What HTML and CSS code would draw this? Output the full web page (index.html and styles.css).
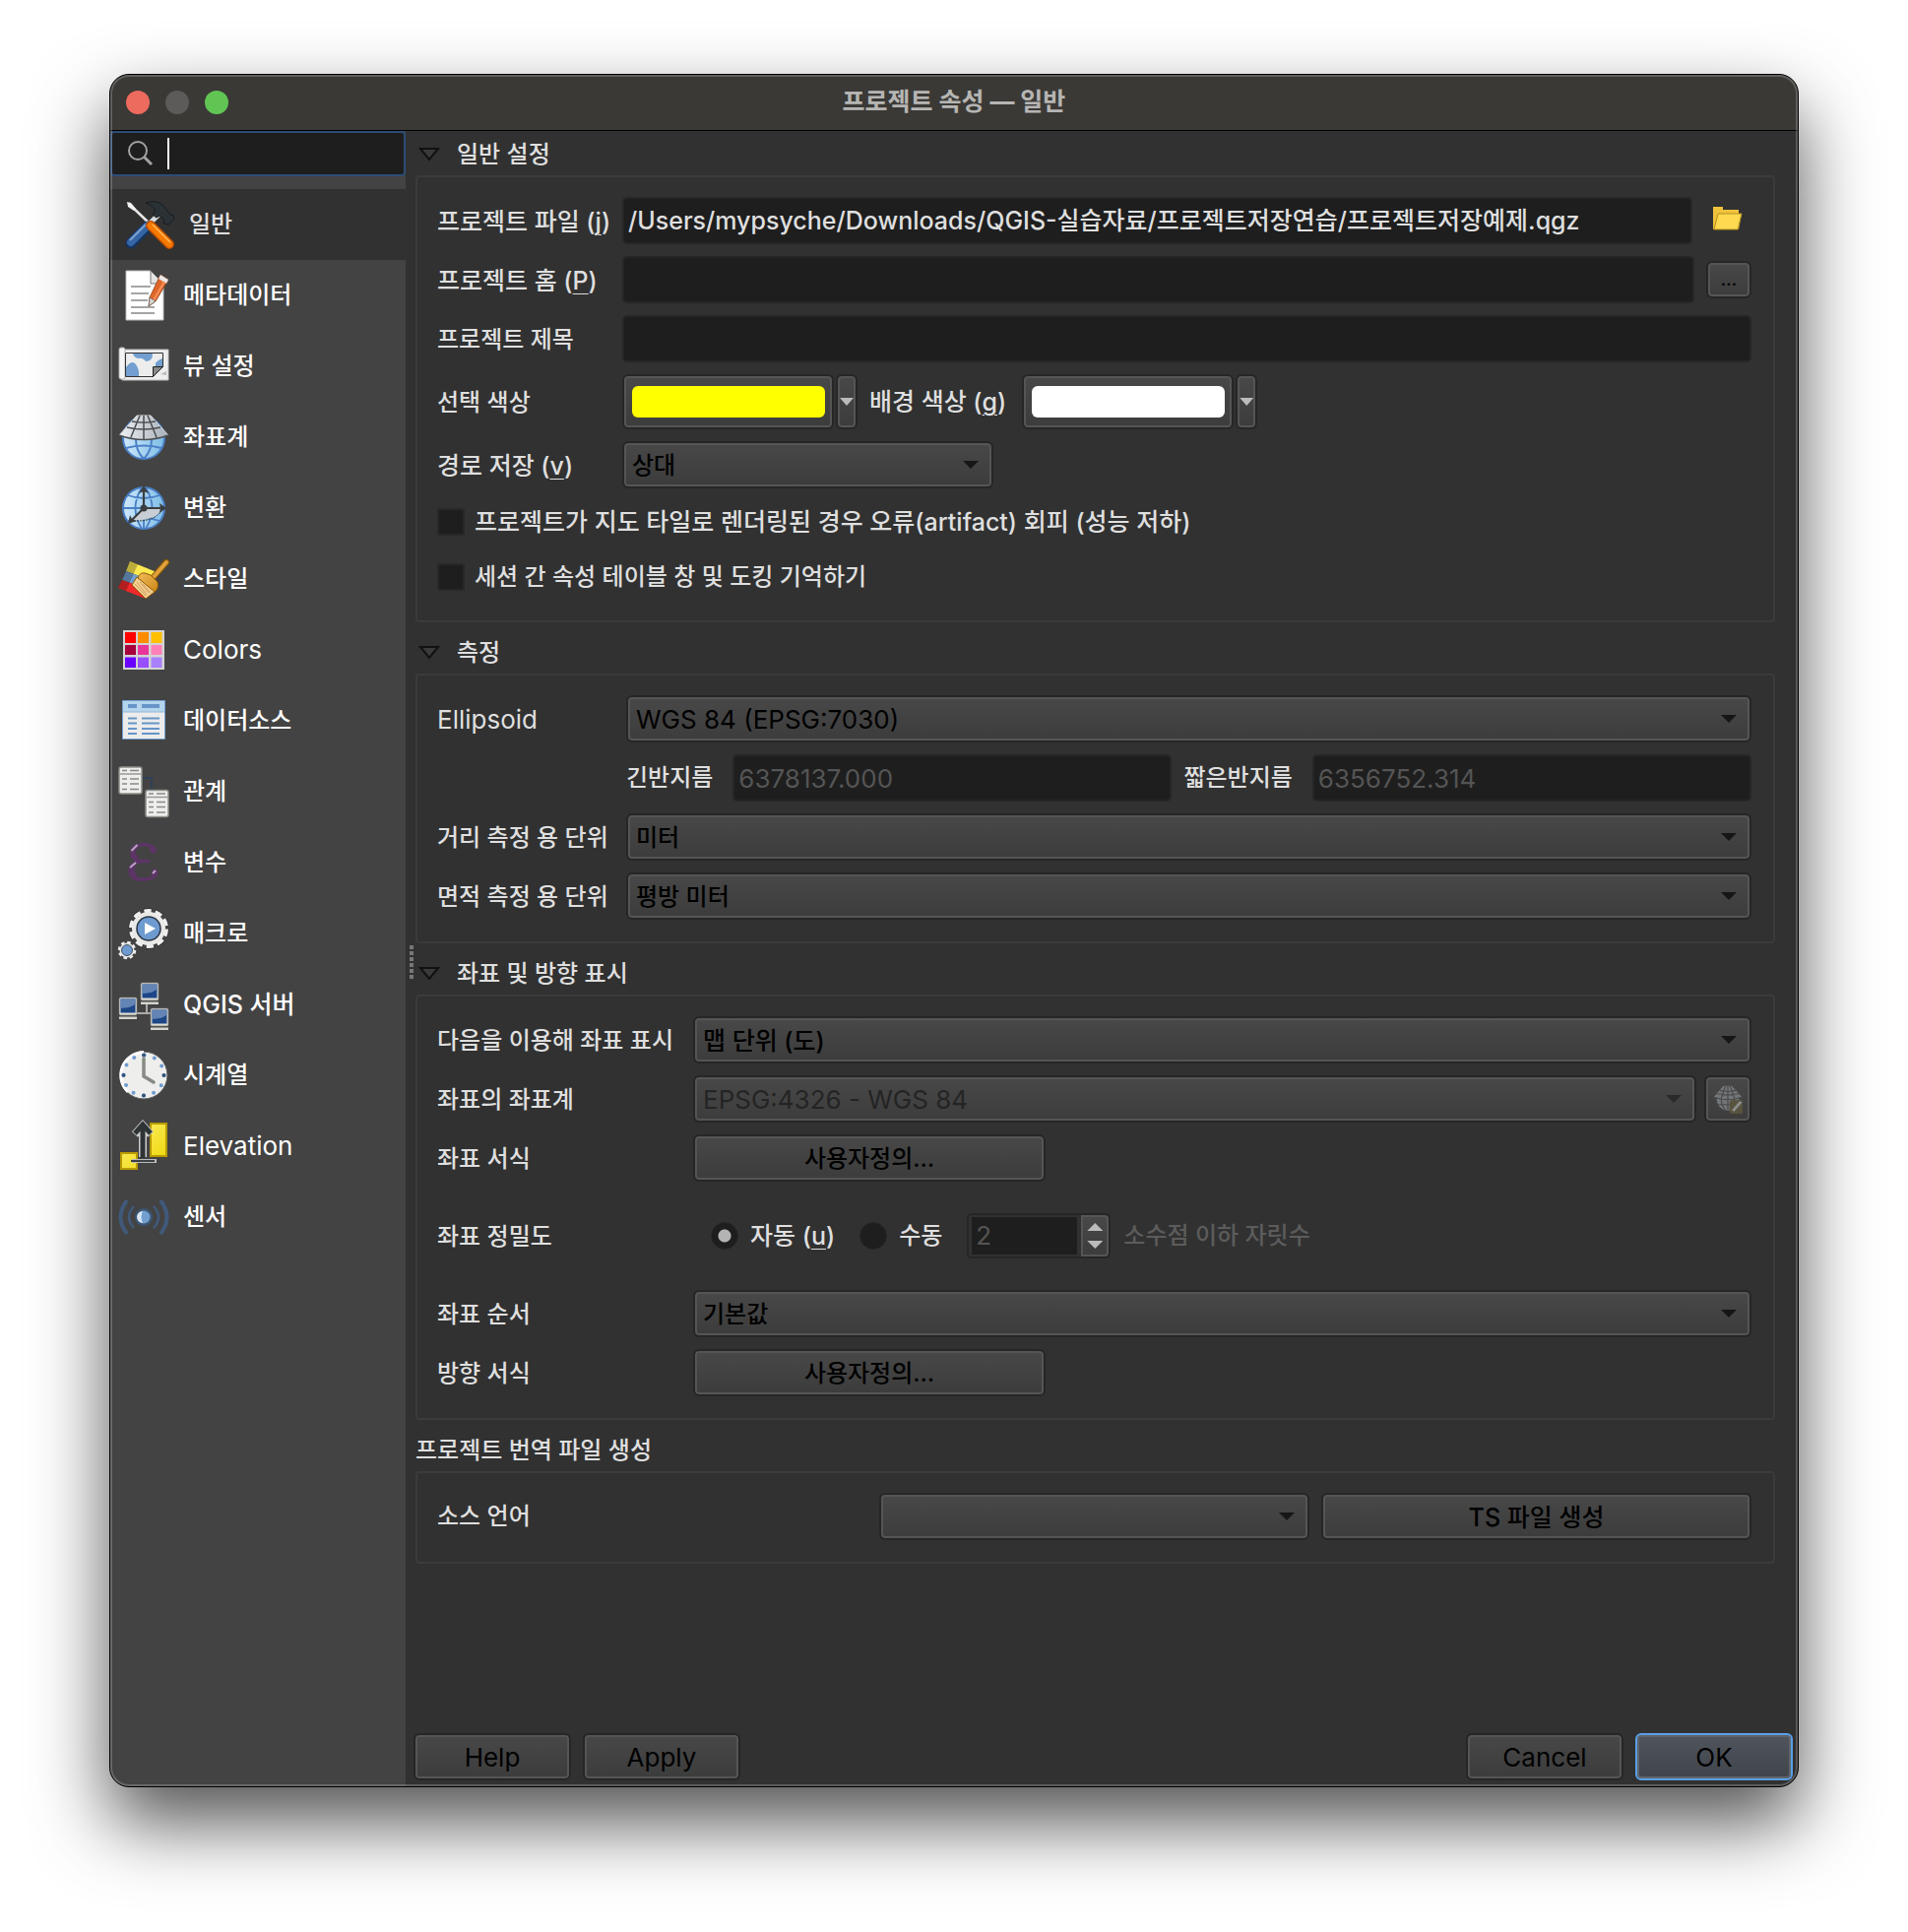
FILE: index.html
```html
<!DOCTYPE html>
<html lang="ko">
<head>
<meta charset="utf-8">
<meta name="viewport" content="width=device-width, initial-scale=1">
<title>프로젝트 속성 — 일반</title>
<link rel="stylesheet" href="styles.css">
</head>
<body>
<svg class="defs" aria-hidden="true">
  <defs>
    <linearGradient id="sea" x1="0" x2="1"><stop offset="0" stop-color="#cfe8fb"/><stop offset="1" stop-color="#7dbde6"/></linearGradient>
    <linearGradient id="steel" x1="0" x2="1"><stop offset="0" stop-color="#eef0f3"/><stop offset="1" stop-color="#a9b0ba"/></linearGradient>
    <linearGradient id="gold" x1="0" x2="1" y2="1"><stop offset="0" stop-color="#fff27a"/><stop offset="1" stop-color="#ecd500"/></linearGradient>
    <linearGradient id="screen" y2="1" x2="0"><stop offset="0" stop-color="#6d8cba"/><stop offset=".5" stop-color="#3b62a0"/><stop offset=".6" stop-color="#1d4687"/><stop offset="1" stop-color="#1d4687"/></linearGradient>
    <linearGradient id="wood" x1="0" x2="1" y2="1"><stop offset="0" stop-color="#f3bd5d"/><stop offset="1" stop-color="#c98413"/></linearGradient>
    <g id="crs">
      <circle cx="26" cy="27" r="21" fill="url(#sea)" stroke="#4a7fc6" stroke-width="2"/>
      <path d="M18 28c0 8 3 15 8 20c5-5 8-12 8-20M8 37q18 -5 36 0" fill="none" stroke="#4a7fc6" stroke-width="2"/>
      <path d="M19 4h14l18 20q-25 9-50 0z" fill="url(#steel)" stroke="#d5d8dc"/>
      <path d="M14 10q12 2 24 0M9 16q17 4 34 0M1 24q25 9 50 0M22 4l-9 22M30 4l9 22M26 4v24" fill="none" stroke="#4b4d50" stroke-width="1.5"/>
    </g>
    <g id="sheet">
      <rect x="1" y="1" width="23" height="27" rx="2" fill="#eeeeec" stroke="#8c8e88" stroke-width="1.5"/>
      <path d="M2 8h21" stroke="#999" stroke-width="1.5"/>
      <path d="M4 4.500h5M12 4.500h9M4 13h5M12 13h9M4 18h5M12 18h9M4 23.500h5M12 23.500h9" stroke="#888a85" stroke-width="1.6"/>
    </g>
    <g id="pc">
      <rect x="0" y="0" width="18" height="18" rx="1.500" fill="#dcdcd4" stroke="#777" stroke-width=".7"/>
      <rect x="1.500" y="1.500" width="15" height="14" fill="#1d4687"/>
      <path d="M1.500 1.500h15v5q-4 4-15 4.500z" fill="#6384b5"/>
      <path d="M0 19.500h18v2.500h-18z" fill="#d3d7cf"/>
    </g>
  </defs>
</svg>

<div class="window">
  <header class="titlebar">
    <div class="lights">
      <button type="button" class="light close" aria-label="닫기"></button>
      <button type="button" class="light minimize" aria-label="최소화" disabled></button>
      <button type="button" class="light maximize" aria-label="확대"></button>
    </div>
    <h1>프로젝트 속성 — 일반</h1>
  </header>

  <div class="body">
    <aside class="sidebar">
      <label class="search">
        <svg viewBox="0 0 26 26" aria-hidden="true"><circle cx="10" cy="10" r="9" fill="none" stroke="#a2a2a2" stroke-width="2"/><path d="M16 16l8 8" stroke="#a2a2a2" stroke-width="3"/></svg>
        <span class="caret"></span>
        <input type="text" aria-label="검색">
      </label>
      <nav class="nav">
        <a href="#general" class="item active" aria-current="page">
          <svg viewBox="0 0 52 52" aria-hidden="true">
            <path d="M6 6l21 20" stroke="#e8e8e8" stroke-width="2.5"/><path d="M3 3l4 1 5 6-2 2-6-4z" fill="#f2f2f2"/>
            <path d="M35 16l-9 9" stroke="#d9dcdf" stroke-width="5"/>
            <path d="M22 4q11-4 18 3l7 9h3l.5 5-5 5-5-1 0-4-4-4-4 2-3-3 2-5q-3-5-9-7z" fill="#2b3236" stroke="#181c1e"/>
            <path d="M24 28L7 45" stroke="#16335f" stroke-width="11" stroke-linecap="round"/><path d="M24 27L7 44" stroke="#3465a4" stroke-width="8" stroke-linecap="round"/><path d="M22 26L6 42" stroke="#7ba0d0" stroke-width="2"/>
            <path d="M27 27L46 46" stroke="#b94a00" stroke-width="10" stroke-linecap="round"/><path d="M27 27L46 46" stroke="#f57900" stroke-width="7" stroke-linecap="round"/><path d="M29 26L47 44" stroke="#ffad45" stroke-width="2"/>
          </svg>
          <span>일반</span></a>
        <a href="#metadata" class="item">
          <svg viewBox="0 0 52 52" aria-hidden="true">
            <path d="M8 1h25l13 13v37H8z" fill="#fff" stroke="#bbb"/><path d="M33 1v13h13z" fill="#e4e4e4" stroke="#777"/>
            <path d="M13 17h20M13 24h18M13 31h17M13 38h24M13 44h24" stroke="#888" stroke-width="1.500"/>
            <path d="M43 5l8 5-13 22-7 5 1-9z" fill="#e0672b" stroke="#8d3d14" stroke-width=".8"/><path d="M43 5l8 5-2 4-8-5z" fill="#e8e8e8"/><path d="M47 12L36 31" stroke="#f6925c" stroke-width="2"/><path d="M32 28l6 4-7 5z" fill="#d8d3cd" stroke="#666" stroke-width=".8"/>
          </svg>
          <span>메타데이터</span></a>
        <a href="#view" class="item">
          <svg viewBox="0 0 52 52" aria-hidden="true">
            <path d="M4 9h47v31H4z" fill="#eee" stroke="#bdbdbd"/><rect x="1" y="7" width="6" height="32" rx="2" fill="#f4f4f4" stroke="#b5b5b5"/>
            <path d="M7.500 12.500h38v14l-10 10h-28z" fill="#ededed" stroke="#333"/>
            <path d="M15 13h20q0 8-7 8-3-4-8-3-4-1-5-5zM8 27q6-8 10-3 4 6 3 12H8zM45 18v9h-4q-1 3-3 0-2-6 7-9z" fill="#729fcf"/>
            <path d="M35.500 26.500h10l-10 10z" fill="#888" stroke="#222"/><path d="M43 34l6-3v4z" fill="#bbb"/>
          </svg>
          <span>뷰 설정</span></a>
        <a href="#crs-page" class="item">
          <svg viewBox="0 0 52 52" aria-hidden="true"><use href="#crs"/></svg>
          <span>좌표계</span></a>
        <a href="#transform" class="item">
          <svg viewBox="0 0 52 52" aria-hidden="true">
            <circle cx="26" cy="26" r="21" fill="url(#sea)" stroke="#4a7fc6" stroke-width="2"/>
            <path d="M5 26h42M26 5v42M10 13q16 6 32 0M10 39q16-6 32 0M24 5q-13 21 0 42M28 5q13 21 0 42" fill="none" stroke="#4a7fc6" stroke-width="1.800"/>
            <path d="M26 26h18q-4 13-29 12z" fill="#c9ced4"/><path d="M44 28q-6 12-30 11" fill="none" stroke="#333" stroke-dasharray="2 1"/>
            <path d="M26 26V8M26 26h18M26 26L14 38" stroke="#3a3d40" stroke-width="2.200"/><circle cx="26" cy="26" r="3.500" fill="#3a3d40"/>
            <path d="M26 3l5 8-5-2-5 2zM49 26l-7-5 1 5-1 5zM10 42l2-9 2 4 5 2z" fill="#3a3d40"/>
          </svg>
          <span>변환</span></a>
        <a href="#styles" class="item">
          <svg viewBox="0 0 52 52" aria-hidden="true">
            <path d="M12 8l27 11-4 9-27-10z" fill="#fce94f"/><path d="M8 18l27 10-3 9-28-10z" fill="#729fcf"/><path d="M4 27l28 10-4 9-28-11z" fill="#ef2929"/>
            <path d="M12 8l8 3-12 27-8-3z" fill="#000" opacity=".25"/>
            <path d="M35 25L49 9" stroke="#8f5902" stroke-width="6" stroke-linecap="round"/><path d="M35 25L49 9" stroke="#e0a03c" stroke-width="4" stroke-linecap="round"/>
            <path d="M20 25q2-6 7-5l6 2 7 7q2 7-4 11z" fill="url(#wood)" stroke="#8f5902"/>
            <path d="M19 24l18 15-9 7-14-14z" fill="#f4cf90" stroke="#8f5902"/><path d="M19 29l10 13M22 29l9 11M17 31l11 12M25 31l8 9" stroke="#c79a55" stroke-width=".9"/>
          </svg>
          <span>스타일</span></a>
        <a href="#colors" class="item latin">
          <svg viewBox="0 0 52 52" aria-hidden="true">
            <path d="M5 6h42v40H5z" fill="#d3d3d3"/>
            <path d="M7 8h11v11H7z" fill="#f00"/><path d="M20 8h11v11H20z" fill="#ff8c00"/><path d="M33.500 8h11v11h-11z" fill="#ffc000"/>
            <path d="M7 21h11v10H7z" fill="#a8003c"/><path d="M20 21h11v10H20z" fill="#e8359a"/><path d="M33.500 21h11v10h-11z" fill="#ff80b8"/>
            <path d="M7 33.500h11v10.500H7z" fill="#6a00ff"/><path d="M20 33.500h11v10.500H20z" fill="#9850ff"/><path d="M33.500 33.500h11v10.500h-11z" fill="#a880fa"/>
          </svg>
          <span>Colors</span></a>
        <a href="#sources" class="item">
          <svg viewBox="0 0 52 52" aria-hidden="true">
            <path d="M4.500 5.500h43v39h-43z" fill="#ececec" stroke="#729fcf"/><path d="M5 6h42v11H5z" fill="#b5d5ec"/><path d="M5 17h42" stroke="#93b5d9"/>
            <path d="M10 11h9M24 11h18" stroke="#6795c8" stroke-width="4"/>
            <path d="M10 23.500h9M24 23.500h18M10 28.500h9M24 28.500h18M10 34h9M24 34h18M10 39h9M24 39h18" stroke="#6795c8" stroke-width="2"/>
          </svg>
          <span>데이터소스</span></a>
        <a href="#relations" class="item">
          <svg viewBox="0 0 52 52" aria-hidden="true"><path d="M25 12h9v12" fill="none" stroke="#2a3f5e" stroke-width="1.500"/><use href="#sheet"/><use href="#sheet" x="27" y="23.500"/></svg>
          <span>관계</span></a>
        <a href="#variables" class="item">
          <svg viewBox="0 0 52 52" aria-hidden="true">
            <path d="M37 13Q34 7.500 26 7.500T15 15.500T25 24.500H32M25 24.500Q12.500 26 12.500 35T26 43T38 36" fill="none" stroke="#5c3566" stroke-width="3.500"/>
            <path d="M18 9q-7 7 1 14" fill="none" stroke="#5c3566" stroke-width="5"/><path d="M16 28q-6 7 2 13" fill="none" stroke="#5c3566" stroke-width="6"/>
            <circle cx="35.500" cy="13" r="3.500" fill="#5c3566"/><circle cx="37" cy="36" r="3.500" fill="#5c3566"/>
            <path d="M13.500 14l6-6M12 31l6-5M35 37l3-3" stroke="#bda3c4" stroke-width="2"/>
          </svg>
          <span>변수</span></a>
        <a href="#macros" class="item">
          <svg viewBox="0 0 52 52" aria-hidden="true">
            <circle cx="31" cy="21" r="18" fill="none" stroke="#2c2c2c" stroke-width="5.500" stroke-dasharray="8.300 3.010"/>
            <circle cx="31" cy="21" r="18" fill="none" stroke="#eee" stroke-width="4" stroke-dasharray="7.300 4.010" stroke-dashoffset="-.500"/>
            <circle cx="31" cy="21" r="17" fill="#e9e9e8"/><circle cx="31" cy="21" r="12" fill="#6d9bd0" stroke="#2a3442" stroke-width="1.500"/><path d="M27 15l11 6-11 6z" fill="#fff"/>
            <circle cx="9" cy="43" r="8" fill="none" stroke="#eee" stroke-width="2.500" stroke-dasharray="3.500 2.780"/><circle cx="9" cy="43" r="7.500" fill="#e9e9e8"/><circle cx="9" cy="43" r="5.500" fill="#6d9bd0" stroke="#2a3442" stroke-width=".8"/>
          </svg>
          <span>매크로</span></a>
        <a href="#server" class="item mixed">
          <svg viewBox="0 0 52 52" aria-hidden="true"><path d="M29 26v9M19 35h14" stroke="#aaa" stroke-width="2"/><use href="#pc" x="23" y="4"/><use href="#pc" x="1" y="19"/><use href="#pc" x="33" y="30"/></svg>
          <span>QGIS 서버</span></a>
        <a href="#temporal" class="item">
          <svg viewBox="0 0 52 52" aria-hidden="true">
            <circle cx="26" cy="26" r="24" fill="#eeeeec" stroke="#5a5a5a"/><path d="M10 43A23.500 23.500 0 0 1 26 2.500" fill="none" stroke="#fff" stroke-width="3"/>
            <circle cx="26" cy="26" r="20.500" fill="none" stroke="#6d9bd0" stroke-width="4" stroke-linecap="round" stroke-dasharray="0 10.733"/>
            <path d="M26 5.500h0M26 46.500h0M5.500 26h0M46.500 26h0" stroke="#36557c" stroke-width="4" stroke-linecap="round"/>
            <path d="M26 9v18l10 6" fill="none" stroke="#888a85" stroke-width="3.500" stroke-linecap="round"/>
          </svg>
          <span>시계열</span></a>
        <a href="#elevation" class="item latin">
          <svg viewBox="0 0 52 52" aria-hidden="true">
            <path d="M33 3h16v33H33zM3 33h16v16H3z" fill="url(#gold)" stroke="#b89a00" stroke-width="2"/>
            <path d="M25 3v34M17 14l8-9 8 9" fill="none" stroke="#ccc" stroke-width="8"/><path d="M25 4v34M17 13l8-9 8 9" fill="none" stroke="#2e3436" stroke-width="5"/>
            <path d="M14 41h25" stroke="#bbb" stroke-width="4"/><path d="M13 41h24" stroke="#2e3436" stroke-width="1.800"/>
          </svg>
          <span>Elevation</span></a>
        <a href="#sensors" class="item">
          <svg viewBox="0 0 52 52" aria-hidden="true">
            <circle cx="26" cy="26" r="9" fill="#3b5674"/><circle cx="26" cy="26" r="6.500" fill="#729fcf"/><path d="M25 20a6 6 0 0 0 0 12q-3-6 0-12z" fill="#dbe6f3"/>
            <path d="M9 9Q-4 26 9 43M43 9Q56 26 43 43" fill="none" stroke="#40597a" stroke-width="4"/>
            <path d="M16 15Q6 26 16 37M36 15Q46 26 36 37" fill="none" stroke="#40597a" stroke-width="2.500"/>
          </svg>
          <span>센서</span></a>
      </nav>
    </aside>

    <div class="splitter" aria-hidden="true"><i></i><i></i><i></i><i></i><i></i><i></i></div>

    <main class="main">
      <form class="form">
        <section class="group">
          <h2><button type="button" class="toggle" aria-expanded="true"><svg viewBox="0 0 22 14" aria-hidden="true"><path d="M2 1h18l-9 11z" fill="#3a3a3a" stroke="#111" stroke-width="2"/></svg>일반 설정</button></h2>
          <div class="box">
            <div class="row narrow">
              <label for="file" class="mixed">프로젝트 파일 (<u>j</u>)</label>
              <input id="file" class="field grow mixed" type="text" readonly value="/Users/mypsyche/Downloads/QGIS-실습자료/프로젝트저장연습/프로젝트저장예제.qgz">
              <button type="button" class="folder" aria-label="폴더 열기"><svg viewBox="0 0 30 24" aria-hidden="true"><path d="M0 0h10v3h16v4h3l-3 16H0z" fill="#f0c33c"/><path d="M5 7h24l-4 16H1z" fill="#ffda50" stroke="#b58e1a"/></svg></button>
            </div>
            <div class="row narrow">
              <label for="home" class="mixed">프로젝트 홈 (<u>P</u>)</label>
              <input id="home" class="field grow" type="text">
              <button type="button" class="btn browse">…</button>
            </div>
            <div class="row narrow">
              <label for="ptitle">프로젝트 제목</label>
              <input id="ptitle" class="field grow" type="text">
            </div>
            <div class="row narrow">
              <span class="label">선택 색상</span>
              <div class="color">
                <button type="button" class="btn swatch" aria-label="선택 색상"><span class="yellow"></span></button>
                <button type="button" class="btn drop" aria-label="선택 색상 메뉴"></button>
              </div>
              <span class="mixed">배경 색상 (<u>g</u>)</span>
              <div class="color after">
                <button type="button" class="btn swatch" aria-label="배경 색상"><span class="white"></span></button>
                <button type="button" class="btn drop" aria-label="배경 색상 메뉴"></button>
              </div>
            </div>
            <div class="row narrow">
              <label for="paths" class="mixed">경로 저장 (<u>v</u>)</label>
              <span class="combo short"><select id="paths" class="btn"><option>상대</option></select></span>
            </div>
            <label class="row check mixed"><input type="checkbox">프로젝트가 지도 타일로 렌더링된 경우 오류(artifact) 회피 (성능 저하)</label>
            <label class="row check"><input type="checkbox">세션 간 속성 테이블 창 및 도킹 기억하기</label>
          </div>
        </section>

        <section class="group">
          <h2><button type="button" class="toggle" aria-expanded="true"><svg viewBox="0 0 22 14" aria-hidden="true"><path d="M2 1h18l-9 11z" fill="#3a3a3a" stroke="#111" stroke-width="2"/></svg>측정</button></h2>
          <div class="box">
            <div class="row medium">
              <label for="ellipsoid" class="latin">Ellipsoid</label>
              <span class="combo grow"><select id="ellipsoid" class="btn latin"><option>WGS 84 (EPSG:7030)</option></select></span>
            </div>
            <div class="row medium">
              <span class="label"></span>
              <div class="axes">
                <label for="major">긴반지름</label>
                <input id="major" class="field latin" type="text" value="6378137.000" disabled>
                <label for="minor">짧은반지름</label>
                <input id="minor" class="field latin" type="text" value="6356752.314" disabled>
              </div>
            </div>
            <div class="row medium">
              <label for="dist">거리 측정 용 단위</label>
              <span class="combo grow"><select id="dist" class="btn"><option>미터</option></select></span>
            </div>
            <div class="row medium">
              <label for="area">면적 측정 용 단위</label>
              <span class="combo grow"><select id="area" class="btn"><option>평방 미터</option></select></span>
            </div>
          </div>
        </section>

        <section class="group">
          <h2><button type="button" class="toggle" aria-expanded="true"><svg viewBox="0 0 22 14" aria-hidden="true"><path d="M2 1h18l-9 11z" fill="#3a3a3a" stroke="#111" stroke-width="2"/></svg>좌표 및 방향 표시</button></h2>
          <div class="box">
            <div class="row wide">
              <label for="display">다음을 이용해 좌표 표시</label>
              <span class="combo grow"><select id="display" class="btn mixed"><option>맵 단위 (도)</option></select></span>
            </div>
            <div class="row wide tight">
              <label for="coordcrs">좌표의 좌표계</label>
              <span class="combo grow"><select id="coordcrs" class="btn latin" disabled><option>EPSG:4326 - WGS 84</option></select></span>
              <button type="button" class="btn crsbtn" disabled aria-label="좌표계 선택"><svg viewBox="0 0 52 52" aria-hidden="true">
                <path d="M6 25q1 19 20 22 18-2 20-22z" fill="#737678"/><path d="M18 3h15l18 20q-25 8-50 0z" fill="#737678"/>
                <path d="M12 11q14 3 28 0M7 17q19 4 38 0M1 23q25 8 50 0M22 3l-8 23q1 12 8 20M30 3l8 23q-1 12-8 20M26 3v43M8 36h36" fill="none" stroke="#4a4a4a" stroke-width="2"/>
                <rect x="29" y="28" width="24" height="24" rx="4" fill="#57533f"/><path d="M49 31L35 47" stroke="#8d8d8d" stroke-width="5"/></svg></button>
            </div>
            <div class="row wide">
              <span class="label">좌표 서식</span>
              <button type="button" class="btn custom">사용자정의…</button>
            </div>
            <div class="row wide tall">
              <span class="label">좌표 정밀도</span>
              <div class="precision">
                <label class="radio mixed"><input type="radio" name="precision" checked><span>자동 (<u>u</u>)</span></label>
                <label class="radio"><input type="radio" name="precision">수동</label>
                <div class="spin">
                  <input class="latin" type="text" inputmode="numeric" value="2" disabled aria-label="소수점 이하 자릿수">
                  <div class="arrows"><i class="up"></i><i class="down"></i></div>
                </div>
                <span class="muted">소수점 이하 자릿수</span>
              </div>
            </div>
            <div class="row wide">
              <label for="order">좌표 순서</label>
              <span class="combo grow"><select id="order" class="btn"><option>기본값</option></select></span>
            </div>
            <div class="row wide">
              <span class="label">방향 서식</span>
              <button type="button" class="btn custom">사용자정의…</button>
            </div>
          </div>
        </section>

        <section class="group">
          <h2>프로젝트 번역 파일 생성</h2>
          <div class="box">
            <div class="thirds">
              <label for="lang">소스 언어</label>
              <span class="combo"><select id="lang" class="btn"><option></option></select></span>
              <button type="button" class="btn mixed">TS 파일 생성</button>
            </div>
          </div>
        </section>
      </form>

      <footer class="actions">
        <button type="button" class="btn latin">Help</button>
        <button type="button" class="btn latin">Apply</button>
        <button type="button" class="btn latin push">Cancel</button>
        <button type="button" class="btn latin primary">OK</button>
      </footer>
    </main>
  </div>
</div>
</body>
</html>
```
FILE: styles.css
```css
* { box-sizing: border-box; }

body {
  margin: 0;
  min-height: 100vh;
  padding: 75px 111px 147px;
  display: flex;
  background: #fff;
  color: #dfdfdf;
  font: 500 24px/36px Inter, "Noto Sans CJK KR", sans-serif;
}

button, input, select { font: inherit; color: inherit; margin: 0; }
u { text-decoration-thickness: 1px; text-underline-offset: 4px; }
.defs { position: absolute; width: 0; height: 0; }

/* text sizes: Hangul 24px, Hangul with Latin 25px, Latin alone 26px */
.mixed { font-size: 25px; }
.latin { font-size: 26px; font-weight: 400; }

.window {
  position: relative;
  flex: 1;
  min-width: 0;
  display: flex;
  flex-direction: column;
  border: 1px solid #000;
  border-radius: 20px;
  overflow: hidden;
  background: #313131;
  box-shadow: 0 36px 76px rgba(0, 0, 0, .68);
}
/* light rim inside the window edge */
.window::after {
  content: "";
  position: absolute;
  inset: 0;
  border: 2px solid rgba(255, 255, 255, .2);
  border-radius: 19px;
  pointer-events: none;
}

.titlebar {
  display: grid;
  grid-template-columns: 1fr auto 1fr;
  align-items: center;
  height: 57px;
  padding: 0 16px;
  background: #3a3936;
  border-bottom: 1px solid #000;
}
.titlebar h1 { margin: 0; padding-bottom: 2px; font-size: 25px; line-height: 36px; font-weight: 700; color: #b6b5b3; }
.lights { display: flex; gap: 16px; }
.light { width: 24px; height: 24px; padding: 0; border: 0; border-radius: 50%; }
.close { background: #ed6a5e; }
.minimize { background: #5c5b59; }
.maximize { background: #61c554; }

.body { flex: 1; display: flex; }

.sidebar { width: 300px; flex: none; background: #434343; }
.search {
  display: flex;
  align-items: center;
  height: 46px;
  padding: 0 16px;
  background: #1e1e1e;
  border: 2px solid #2c4d75;
  border-radius: 4px;
}
.search svg { width: 26px; height: 26px; flex: none; }
.caret { width: 2px; height: 32px; margin-left: 14px; background: #fff; }
.search input { flex: 1; min-width: 0; height: 36px; padding: 0; border: 0; outline: 0; background: transparent; }

.nav { padding-top: 13px; }
.item {
  display: flex;
  align-items: center;
  gap: 14px;
  height: 72px;
  padding-left: 8px;
  color: #fff;
  text-decoration: none;
}
.item svg { width: 52px; height: 52px; flex: none; overflow: visible; }
.item.active { padding-left: 14px; background: #313131; color: #dfdfdf; }

.splitter {
  width: 10px;
  flex: none;
  display: flex;
  flex-direction: column;
  align-items: flex-end;
  justify-content: center;
  gap: 2px;
  padding: 6px 2px 0 0;
}
.splitter i { width: 4px; height: 4px; background: #777; }

.main { flex: 1; min-width: 0; display: flex; flex-direction: column; padding: 0 5px 6px 0; }
.form { flex: 1; padding: 3px 18px 24px 0; }

.group + .group { padding-top: 10px; }
.group h2 { margin: 0; height: 42px; font-size: 24px; line-height: 42px; font-weight: 500; }
.toggle {
  display: flex;
  align-items: center;
  gap: 17px;
  height: 42px;
  padding: 0 0 0 3px;
  border: 0;
  background: none;
}
.toggle svg { width: 22px; height: 14px; }
.box {
  display: flex;
  flex-direction: column;
  gap: 12px;
  padding: 20px 22px 22px 20px;
  border: 2px solid #3b3b3b;
  border-radius: 4px;
}

.row { display: flex; align-items: center; gap: 12px; min-height: 48px; }
.row > label, .row > .label { flex: none; padding-top: 2px; white-space: nowrap; }
.narrow > label, .narrow > .label { width: 176px; }
.medium > label, .medium > .label { width: 180px; }
.wide > label, .wide > .label { width: 248px; }
.tight { gap: 8px; }
.tight > label { width: 252px; }
.tall { min-height: 86px; }
.grow { flex: 1; min-width: 0; }

.field {
  height: 48px;
  min-width: 0;
  padding: 0 4px;
  background: #1e1e1e;
  border: 2px solid #262626;
  border-radius: 5px;
}
.field[readonly] { padding-bottom: 4px; }
.field:disabled { color: #555; }

.btn {
  height: 48px;
  padding: 2px 8px 0;
  color: #000;
  border: 2px solid #262626;
  border-radius: 6px;
  background: linear-gradient(#484848, #3c3c3c);
  box-shadow: inset 0 0 0 2px #555;
}
.btn:disabled { color: #242424; opacity: 1; }

.combo { position: relative; display: flex; min-width: 0; }
.combo select { appearance: none; width: 100%; }
.combo::after {
  content: "";
  position: absolute;
  right: 15px;
  top: 20px;
  width: 16px;
  height: 8px;
  background: #161616;
  clip-path: polygon(0 0, 100% 0, 50% 100%);
  pointer-events: none;
}
.combo:has(:disabled)::after { background: #2a2a2a; }
.short { width: 377px; }

.folder { width: 48px; height: 48px; padding: 0 0 4px; border: 0; background: none; display: grid; place-items: center; }
.folder svg { width: 30px; height: 24px; }
.browse { width: 46px; height: 38px; padding: 0; font-size: 18px; line-height: 34px; }

.color { display: flex; gap: 2px; }
.swatch { width: 215px; height: 56px; padding: 0; display: flex; align-items: center; justify-content: center; }
.swatch span { width: 196px; height: 32px; flex: none; border-radius: 6px; }
.yellow { background: #ff0; }
.white { background: #fff; }
.drop { width: 22px; height: 56px; padding: 0; display: grid; place-items: center; }
.drop::before { content: ""; width: 14px; height: 8px; background: #bbb; clip-path: polygon(0 0, 100% 0, 50% 100%); }
.after { margin-left: 4px; }

.check { min-height: 44px; gap: 10px; }
.check input { appearance: none; width: 28px; height: 28px; background: #1e1e1e; border: 2px solid #282828; border-radius: 2px; }

.axes {
  flex: 1;
  display: grid;
  grid-template-columns: auto 1fr auto 1fr;
  align-items: center;
  column-gap: 12px;
}
.axes label { white-space: nowrap; }
.axes .field { margin-left: 8px; }

.crsbtn { width: 48px; padding: 0; display: grid; place-items: center; }
.crsbtn svg { width: 30px; height: 30px; }
.custom { width: 358px; }

.precision { display: flex; align-items: center; padding-left: 18px; gap: 25px; }
.radio { display: flex; align-items: center; gap: 12px; }
.radio input { appearance: none; width: 28px; height: 28px; border-radius: 50%; background: #1e1e1e; border: 1px solid #262626; }
.radio input:checked { background: radial-gradient(circle, #b4b4b4 6px, #1e1e1e 7px); }
.spin { display: flex; width: 146px; height: 46px; border: 2px solid #262626; border-radius: 5px; }
.spin input { flex: 1; min-width: 0; margin: 2px 4px 2px 3px; padding: 0 4px; border: 0; background: #1e1e1e; color: #555; }
.arrows {
  width: 28px;
  display: flex;
  flex-direction: column;
  align-items: center;
  justify-content: center;
  gap: 10px;
  background: linear-gradient(#484848, #3c3c3c);
  border: 2px solid #555;
  border-radius: 0 4px 4px 0;
}
.arrows i { width: 16px; height: 8px; background: #bbb; }
.up { clip-path: polygon(50% 0, 100% 100%, 0 100%); }
.down { clip-path: polygon(0 0, 100% 0, 50% 100%); }
.muted { color: #5c5c5c; margin-left: -12px; }

.thirds { display: grid; grid-template-columns: 1fr 1fr 1fr; align-items: center; gap: 12px; }

.actions { display: flex; gap: 12px; margin-left: -2px; }
.actions .btn { width: 160px; }
.push { margin-left: auto; }
.primary {
  border-color: #5a9ee6;
  background: linear-gradient(#50555d, #40444b);
  box-shadow: inset 0 0 0 2px #60656b;
}
```
